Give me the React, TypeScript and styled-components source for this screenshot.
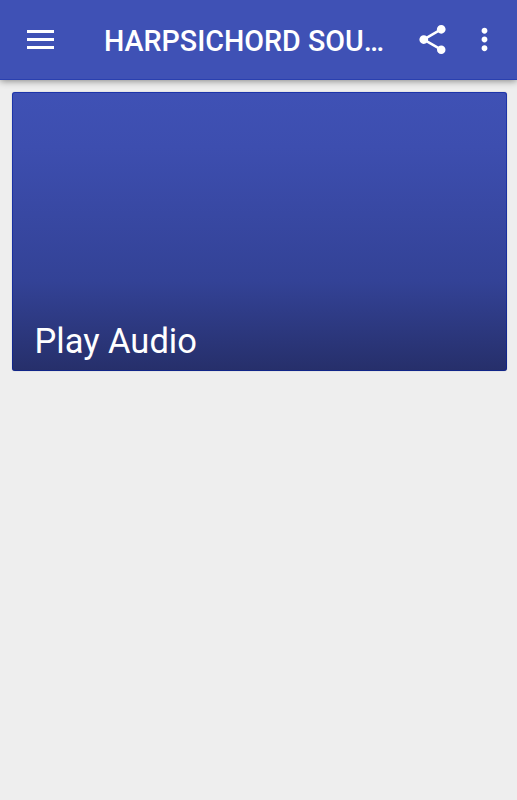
import React from "react";
import styled, { createGlobalStyle } from "styled-components";

const GlobalStyle = createGlobalStyle`
  *, *::before, *::after { box-sizing: border-box; }
  body { margin: 0; background: #eeeeee; font-family: Roboto, sans-serif; }
`;

const Screen = styled.div`
  display: flex;
  flex-direction: column;
  height: 100vh;
  background: #eeeeee;
`;

const Toolbar = styled.header`
  display: flex;
  align-items: center;
  flex: none;
  height: 80px;
  padding: 0 17px 0 22px;
  border-bottom: 1px solid #2a40af;
  background: #3f51b5;
  box-shadow: 0 1px 7px rgba(0, 0, 0, 0.45);
  color: #fff;
`;

const IconButton = styled.button<{ $width: number }>`
  display: flex;
  flex: none;
  align-items: center;
  justify-content: center;
  width: ${({ $width }) => $width}px;
  height: 47px;
  padding: 0;
  border: 0;
  background: none;
  color: inherit;
`;

const Icon = styled.svg`
  display: block;
  flex: none;
  width: 35px;
  height: 35px;
  fill: currentColor;
`;

const MenuIcon = styled.svg`
  display: block;
  flex: none;
  width: 37px;
  height: 37px;
  fill: currentColor;
`;

const Title = styled.h1`
  flex: none;
  width: 283px;
  margin: 3px 28px 0 45px;
  overflow: hidden;
  font-size: 28.65px;
  font-weight: 500;
  line-height: 40px;
  text-overflow: ellipsis;
  white-space: nowrap;
`;

const Content = styled.main`
  padding: 12px 10px 12px 12px;
`;

const Card = styled.article`
  display: flex;
  align-items: flex-end;
  height: 279px;
  padding: 0 22.5px 10px;
  border-radius: 3px;
  background: linear-gradient(#3f51b5 0, #3d4eaf 20%, #334296 68%, #262f6a 100%);
  box-shadow: 0 0 1px rgba(0, 0, 0, 0.35), inset 0 0 0 1px rgba(0, 30, 160, 0.55);
`;

const CardTitle = styled.h2`
  margin: 0;
  color: #fff;
  font-size: 34.5px;
  font-weight: 400;
  line-height: 40px;
`;

export default function App() {
  return (
    <>
      <GlobalStyle />
      <Screen>
        <Toolbar>
          <IconButton $width={37} aria-label="Menu">
            <MenuIcon viewBox="0 0 37 37">
              <path d="M5 9h27v3H5zM5 17h27v3H5zM5 25h27v3H5z" />
            </MenuIcon>
          </IconButton>
          <Title>HARPSICHORD SOUNDS</Title>
          <IconButton $width={35} aria-label="Share">
            <Icon viewBox="0 0 24 24">
              <path d="M18 16.08c-.76 0-1.44.3-1.96.77L8.91 12.7c.05-.23.09-.46.09-.7s-.04-.47-.09-.7l7.05-4.11c.54.5 1.25.81 2.04.81 1.66 0 3-1.34 3-3s-1.34-3-3-3-3 1.34-3 3c0 .24.04.47.09.7L8.04 9.81C7.5 9.31 6.79 9 6 9c-1.66 0-3 1.34-3 3s1.34 3 3 3c.79 0 1.5-.31 2.04-.81l7.12 4.16c-.05.21-.08.43-.08.65 0 1.61 1.31 2.92 2.92 2.92s2.92-1.31 2.92-2.92-1.31-2.92-2.92-2.92z" />
            </Icon>
          </IconButton>
          <IconButton $width={69} aria-label="More options">
            <Icon viewBox="0 0 24 24">
              <path d="M12 8c1.1 0 2-.9 2-2s-.9-2-2-2-2 .9-2 2 .9 2 2 2zm0 2c-1.1 0-2 .9-2 2s.9 2 2 2 2-.9 2-2-.9-2-2-2zm0 6c-1.1 0-2 .9-2 2s.9 2 2 2 2-.9 2-2-.9-2-2-2z" />
            </Icon>
          </IconButton>
        </Toolbar>
        <Content>
          <Card>
            <CardTitle>Play Audio</CardTitle>
          </Card>
        </Content>
      </Screen>
    </>
  );
}
